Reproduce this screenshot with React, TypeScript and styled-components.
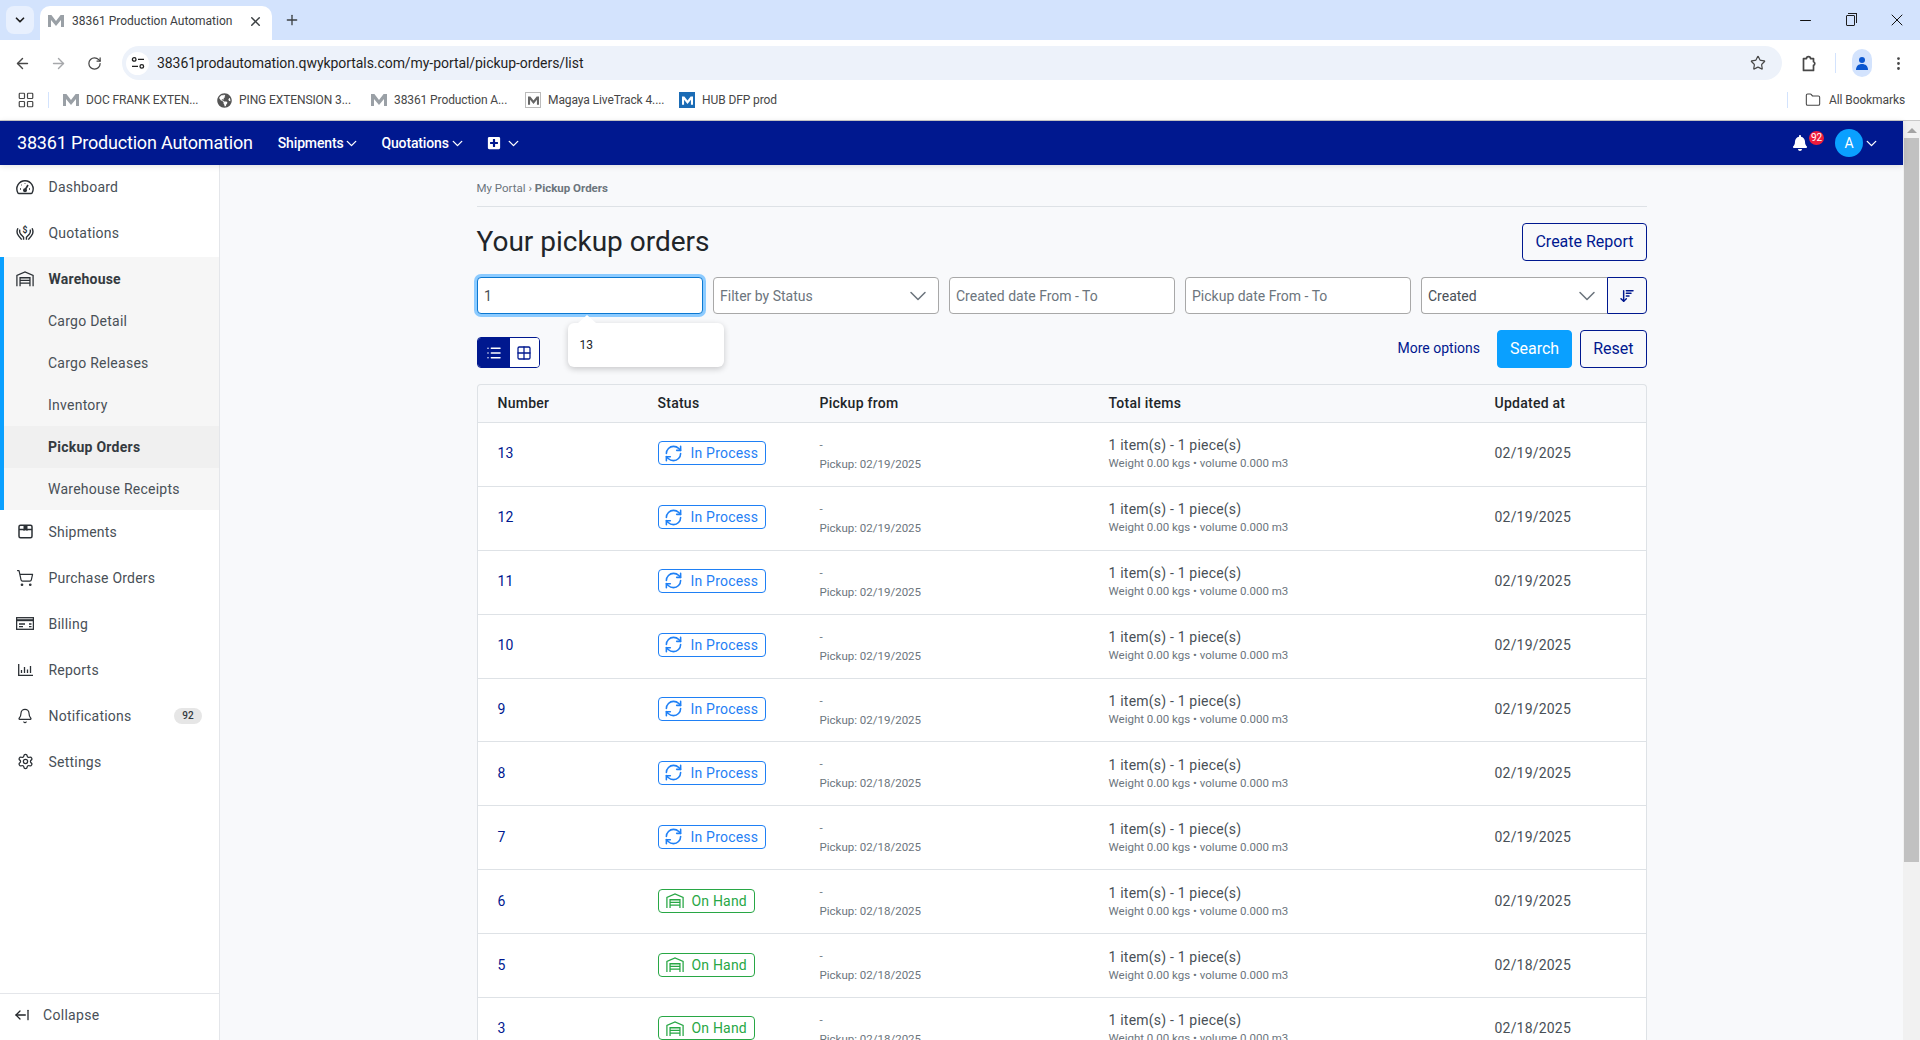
import React from 'react';
import styled, { createGlobalStyle } from 'styled-components';
import {
  ArrowLeft, ArrowRight, RotateCw, Star, EllipsisVertical, LayoutGrid, Folder, ChevronDown,
  X, Plus, Minus, Bell, ShoppingCart, Settings, ArrowLeftFromLine, RefreshCw, List, Grid2x2, ArrowDownWideNarrow,
} from 'lucide-react';
import { FaBell, FaGlobeAmericas, FaPlusSquare } from 'react-icons/fa';

const NAVY = '#00188f';
const SKY = '#0aa0ff';

const GlobalStyle = createGlobalStyle`
  html, body { margin: 0; padding: 0; height: 100%; overflow: hidden; }
  body { font-family: Roboto, "Liberation Sans", sans-serif; font-size: 14px; color: #212529; background: #fff; }
  * { box-sizing: border-box; }
`;

const Screen = styled.div`
  width: 1920px;
  height: 1040px;
  display: flex;
  flex-direction: column;
  overflow: hidden;
`;

/* browser chrome */
const TabStrip = styled.div`
  height: 40px;
  flex: none;
  background: #d3e3fd;
  display: flex;
  align-items: flex-end;
  padding-left: 6px;
`;
const TabSearch = styled.div`
  width: 28px;
  height: 28px;
  margin-bottom: 6px;
  border-radius: 8px;
  background: #e8f0fe;
  display: flex;
  align-items: center;
  justify-content: center;
  color: #1f1f1f;
`;
const Tab = styled.div`
  width: 232px;
  height: 34px;
  margin-left: 6px;
  padding: 0 9px 4px 8px;
  background: #fff;
  border-radius: 10px 10px 0 0;
  display: flex;
  align-items: center;
  gap: 8px;
  font-size: 12px;
  color: #3c4043;
`;
const TabTitle = styled.span`
  flex: 1;
  white-space: nowrap;
`;
const NewTab = styled.div`
  margin: 0 0 10px 12px;
  height: 20px;
  display: flex;
  align-items: center;
  color: #3c4043;
`;
const WindowControls = styled.div`
  margin-left: auto;
  height: 40px;
  display: flex;
  align-items: center;
  color: #111;
`;
const WindowButton = styled.div`
  width: 46px;
  display: flex;
  justify-content: center;
`;
const RestoreGlyph = styled.div`
  width: 9px;
  height: 11px;
  margin-right: 2px;
  border: 1.3px solid #1f1f1f;
  border-radius: 1px;
  position: relative;
  &::before {
    content: '';
    position: absolute;
    top: -3px;
    left: 1px;
    width: 8px;
    height: 9px;
    border-top: 1.3px solid #1f1f1f;
    border-right: 1.3px solid #1f1f1f;
  }
`;
const Toolbar = styled.div`
  height: 40px;
  flex: none;
  background: #fff;
  display: flex;
  align-items: flex-end;
  padding-left: 4px;
  border-radius: 8px 8px 0 0;
`;
const ToolButton = styled.div<{ $dim?: boolean }>`
  width: 36px;
  height: 34px;
  flex: none;
  display: flex;
  align-items: center;
  justify-content: center;
  color: ${(p) => (p.$dim ? '#a6a8ab' : '#474747')};
`;
const Address = styled.div`
  flex: 1;
  height: 34px;
  margin-left: 10px;
  padding: 0 16px 0 4px;
  border-radius: 17px;
  background: #edf2fa;
  display: flex;
  align-items: center;
  gap: 8px;
  font-size: 14px;
  letter-spacing: -0.06px;
  color: #1f1f1f;
`;
const SiteChip = styled.div`
  width: 23px;
  height: 23px;
  border-radius: 50%;
  background: #fff;
  flex: none;
  display: flex;
  align-items: center;
  justify-content: center;
`;
const Url = styled.span`
  flex: 1;
  white-space: nowrap;
`;
const ToolbarRight = styled.div`
  width: 138px;
  height: 34px;
  flex: none;
  display: flex;
  align-items: center;
  padding-left: 9px;
`;
const ToolSeparator = styled.div`
  width: 1px;
  height: 20px;
  background: #d3e3fd;
  margin: 0 16px 0 8px;
  flex: none;
`;
const ProfileChip = styled.div`
  width: 20px;
  height: 28px;
  border-radius: 10px;
  background: #d3e3fd;
  flex: none;
  display: flex;
  align-items: center;
  justify-content: center;
  margin-right: 8px;
`;
const BookmarksBar = styled.div`
  height: 41px;
  flex: none;
  background: #fff;
  border-bottom: 1px solid #c9c9c9;
  display: flex;
  align-items: center;
  padding-left: 17px;
  font-size: 12px;
  letter-spacing: -0.1px;
  color: #474747;
`;
const BarSeparator = styled.div`
  width: 1px;
  height: 16px;
  background: #d3e3fd;
  margin: 0 14px 0 13px;
  flex: none;
`;
const Bookmark = styled.div<{ $last?: boolean }>`
  width: ${(p) => (p.$last ? 'auto' : '154px')};
  flex: none;
  display: flex;
  align-items: center;
  gap: 7px;
  white-space: nowrap;
`;
const AllBookmarks = styled.div`
  margin-left: auto;
  margin-right: 15px;
  display: flex;
  align-items: center;
  gap: 8px;
`;
const AllBookmarksRule = styled.div`
  width: 1px;
  height: 16px;
  background: #d3e3fd;
  margin-right: 9px;
`;

/* page */
const Viewport = styled.div`
  flex: 1;
  min-height: 0;
  display: flex;
`;
const Page = styled.div`
  flex: 1;
  min-width: 0;
  display: flex;
  flex-direction: column;
`;
const Scrollbar = styled.div`
  width: 17px;
  flex: none;
  background: #f1f1f1;
  display: flex;
  flex-direction: column;
  align-items: center;
`;
const ScrollArrow = styled.div`
  margin: 7px 0 5px;
  border-left: 5px solid transparent;
  border-right: 5px solid transparent;
  border-bottom: 5px solid #a3a3a3;
`;
const ScrollThumb = styled.div`
  width: 15px;
  height: 724px;
  background: #c1c1c1;
`;
const NavBar = styled.header`
  height: 44px;
  flex: none;
  background: ${NAVY};
  color: #fff;
  display: flex;
  align-items: center;
  padding: 0 23px 0 17px;
  position: relative;
  z-index: 2;
  box-shadow: 0 1px 6px rgba(0, 0, 0, 0.12);
`;
const Brand = styled.div`
  font-size: 18px;
  letter-spacing: -0.18px;
  margin: -1px 25px 0 0;
  white-space: nowrap;
`;
const NavLink = styled.div`
  display: flex;
  align-items: center;
  font-size: 14px;
  font-weight: 500;
  letter-spacing: -0.15px;
  margin-right: 21px;
`;
const NavChevron = styled(ChevronDown).attrs({ size: 17, strokeWidth: 1.9 })``;
const PlusChevron = styled(NavChevron)`
  margin-left: 4px;
`;
const NavRight = styled.div`
  margin-left: auto;
  display: flex;
  align-items: center;
`;
const BellWrap = styled.div`
  position: relative;
  width: 16px;
  height: 18px;
  margin-right: 26px;
  display: flex;
  align-items: center;
  left: -1px;
`;
const BellBadge = styled.span`
  position: absolute;
  top: -3px;
  left: 17px;
  width: 15px;
  height: 14px;
  border-radius: 50%;
  background: #ed1c3c;
  font-size: 10px;
  line-height: 14px;
  text-align: center;
`;
const Avatar = styled.div`
  width: 28px;
  height: 28px;
  border-radius: 50%;
  background: ${SKY};
  display: flex;
  align-items: center;
  justify-content: center;
  font-size: 14px;
`;
const Body = styled.div`
  flex: 1;
  min-height: 0;
  display: flex;
`;
const Sidebar = styled.aside`
  width: 220px;
  flex: none;
  background: #fff;
  border-right: 1px solid #e4e6ea;
  display: flex;
  flex-direction: column;
`;
const SideItem = styled.div<{ $open?: boolean }>`
  height: ${(p) => (p.$open ? '44px' : '46px')};
  flex: none;
  display: flex;
  align-items: center;
  padding: 0 17px ${(p) => (p.$open ? '0' : '2px')} ${(p) => (p.$open ? '12px' : '16px')};
  color: ${(p) => (p.$open ? '#343a40' : '#495057')};
  font-weight: ${(p) => (p.$open ? 700 : 400)};
  letter-spacing: 0.22px;
`;
const SideIcon = styled.span`
  width: 18px;
  height: 18px;
  margin-right: 14.5px;
  flex: none;
  display: flex;
  align-items: center;
  justify-content: center;
  color: #2b3035;
`;
const SideBadge = styled.span`
  margin-left: auto;
  width: 28px;
  height: 16px;
  border-radius: 8px;
  background: #e6e6e6;
  color: #343a40;
  font-size: 10px;
  font-weight: 500;
  line-height: 16px;
  text-align: center;
  letter-spacing: 0;
`;
const SideGroup = styled.div`
  border-left: 4px solid ${SKY};
  background: #f6f6f6;
  display: flex;
  flex-direction: column;
`;
const SubItem = styled.div<{ $active?: boolean }>`
  height: 41.8px;
  display: flex;
  align-items: center;
  padding: 0 0 1px 44px;
  letter-spacing: 0.25px;
  background: ${(p) => (p.$active ? '#f0f0f0' : 'transparent')};
  color: ${(p) => (p.$active ? '#343a40' : '#495057')};
  font-weight: ${(p) => (p.$active ? 700 : 400)};
`;
const SideFooter = styled.div`
  margin-top: auto;
  height: 47px;
  border-top: 1px solid #e4e6ea;
  display: flex;
  align-items: center;
  gap: 13px;
  padding: 0 0 4px 14px;
  color: #495057;
  letter-spacing: 0.3px;
`;
const Main = styled.main`
  flex: 1;
  min-width: 0;
  background: #f8f9fb;
  overflow: hidden;
`;
const Container = styled.div`
  width: 1170px;
  margin: 0 auto;
  padding-top: 16px;
`;
const Breadcrumb = styled.nav`
  height: 26px;
  border-bottom: 1px solid #dee2e6;
  font-size: 11.5px;
  line-height: 14px;
  color: #6c757d;
  b {
    font-weight: 700;
  }
`;
const TitleRow = styled.div`
  margin-top: 16px;
  display: flex;
  align-items: center;
  justify-content: space-between;
`;
const Title = styled.h1`
  margin: 0;
  font-size: 28px;
  font-weight: 400;
  line-height: 38px;
  color: #212529;
`;
const Button = styled.div<{ $primary?: boolean }>`
  height: 38px;
  padding: 0 12px 2px;
  border: 1px solid ${(p) => (p.$primary ? SKY : NAVY)};
  border-radius: 4px;
  background: ${(p) => (p.$primary ? SKY : 'transparent')};
  color: ${(p) => (p.$primary ? '#fff' : NAVY)};
  font-size: 16px;
  display: flex;
  align-items: center;
`;
const FilterGrid = styled.div`
  margin-top: 16px;
  display: grid;
  grid-template-columns: repeat(5, 1fr);
  gap: 10px;
  height: 37px;
`;
const Field = styled.div<{ $focus?: boolean; $dark?: boolean }>`
  height: 37px;
  padding: 0 6.5px;
  background: #fff;
  border: 1px solid ${(p) => (p.$focus ? '#0b78d1' : '#a8a8a8')};
  border-radius: 4px;
  box-shadow: ${(p) => (p.$focus ? '0 0 0 3px #8ccbff' : 'none')};
  display: flex;
  align-items: center;
  justify-content: space-between;
  color: ${(p) => (p.$dark ? '#495057' : '#6c757d')};
`;
const SelectChevron = styled(ChevronDown).attrs({ size: 28, strokeWidth: 1.3 })`
  margin-right: -1px;
  color: #6c757d;
`;
const SortField = styled.div`
  display: flex;
`;
const SortSelect = styled(Field)`
  flex: 1;
  border-right: 0;
  border-radius: 4px 0 0 4px;
`;
const SortButton = styled.div`
  width: 40px;
  height: 37px;
  flex: none;
  border: 1px solid ${NAVY};
  border-radius: 0 4px 4px 0;
  color: ${NAVY};
  display: flex;
  align-items: center;
  justify-content: center;
`;
const ActionsRow = styled.div`
  margin-top: 16px;
  height: 38px;
  display: flex;
  align-items: flex-end;
  position: relative;
`;
const ViewToggle = styled.div`
  display: flex;
  width: 63px;
  height: 31px;
  border: 1px solid ${NAVY};
  border-radius: 4px;
  overflow: hidden;
`;
const ToggleCell = styled.div<{ $active?: boolean }>`
  flex: ${(p) => (p.$active ? '0 0 32px' : 1)};
  background: ${(p) => (p.$active ? NAVY : '#fff')};
  color: ${(p) => (p.$active ? '#fff' : NAVY)};
  display: flex;
  align-items: center;
  justify-content: center;
`;
const Suggest = styled.div`
  position: absolute;
  left: 91px;
  top: -7px;
  width: 156px;
  height: 44px;
  padding-left: 12px;
  border-radius: 6px;
  background: #fff;
  box-shadow: 0 2px 6px rgba(0, 0, 0, 0.2);
  display: flex;
  align-items: center;
  font-size: 12px;
  color: #212529;
  &::before {
    content: '';
    position: absolute;
    left: 10px;
    top: -8px;
    border-left: 9px solid transparent;
    border-right: 9px solid transparent;
    border-bottom: 8px solid #fff;
  }
`;
const ActionsRight = styled.div`
  margin-left: auto;
  display: flex;
  align-items: center;
  gap: 8px;
`;
const MoreLink = styled.span`
  color: ${NAVY};
  margin: 0 9px 2px 0;
`;
const Table = styled.div`
  margin-top: 16px;
  border: 1px solid #dee2e6;
  border-radius: 4px 4px 0 0;
  border-bottom: 0;
`;
const TableRow = styled.div<{ $head?: boolean }>`
  display: grid;
  grid-template-columns: 160px 162px 289px 386px 1fr;
  align-items: center;
  height: ${(p) => (p.$head ? '38px' : '63.9px')};
  padding-bottom: ${(p) => (p.$head ? '1px' : '2px')};
  background: ${(p) => (p.$head ? 'transparent' : '#fff')};
  border-bottom: 1px solid #dee2e6;
  font-weight: ${(p) => (p.$head ? 500 : 400)};
  color: ${(p) => (p.$head ? '#212529' : '#495057')};
  letter-spacing: ${(p) => (p.$head ? '0.25px' : '0.2px')};
`;
const Cell = styled.div`
  padding-left: 20px;
`;
const NumberLink = styled.span`
  color: ${NAVY};
`;
const StatusChip = styled.span<{ $tone: string }>`
  display: inline-flex;
  align-items: center;
  gap: 8px;
  height: 24px;
  padding: 0 7px;
  border: 1px solid ${(p) => p.$tone};
  border-radius: 4px;
  color: ${(p) => p.$tone};
  letter-spacing: 0.2px;
`;
const SyncIcon = styled(RefreshCw).attrs({ size: 19, strokeWidth: 2 })`
  margin: 0 0 0 -2px;
`;
const CellLine = styled.div<{ $small?: boolean; $tall?: boolean }>`
  font-size: ${(p) => (p.$small ? '11.5px' : '14px')};
  line-height: ${(p) => (p.$tall ? '21px' : p.$small ? '16px' : '20px')};
  color: ${(p) => (p.$small ? '#6c757d' : '#495057')};
  letter-spacing: ${(p) => (p.$small ? '0' : '0.2px')};
`;

const MLogo = ({ color = '#9aa0a6', size = 16 }: { color?: string; size?: number }) => (
  <svg width={size} height={size} viewBox="0 0 16 16"><path fill={color} d="M0 14V2h3.4L8 8l4.6-6H16v12h-3V7l-5 6-5-6v7z" /></svg>
);

const Boxed = styled.span<{ $fill: string; $line: string }>`
  width: 16px;
  height: 16px;
  flex: none;
  background: ${(p) => p.$fill};
  border: 1px solid ${(p) => p.$line};
  display: flex;
  align-items: center;
  justify-content: center;
`;

const ExtensionIcon = () => (
  <svg width="17" height="17" viewBox="0 0 17 17" fill="none" stroke="#474747" strokeWidth="1.7" strokeLinejoin="round">
    <path d="M2.5 3.6h3a2 2 0 0 1 4 0h3v3.2a1.9 1.9 0 0 1 0 3.6v5H2.5z" />
  </svg>
);
const GaugeIcon = () => (
  <svg width="18" height="16" viewBox="0 0 18 16" fill="none" stroke="currentColor" strokeWidth="1.4">
    <path d="M3 14.5h12a1.3 1.3 0 0 0 1.2-.8A8.2 8.2 0 0 0 9 1.7a8.2 8.2 0 0 0-7.2 12 1.3 1.3 0 0 0 1.2.8z" />
    <path d="M9 11l3-5" strokeWidth="1.6" />
    <circle cx="9" cy="11.2" r="1.3" fill="currentColor" />
    <path d="M4 10h1M5.5 6h.5M9 4.2v.6M14 10h-1" strokeWidth="1.5" />
  </svg>
);
const QuoteIcon = () => (
  <svg width="19" height="16" viewBox="0 0 19 16" fill="none" stroke="currentColor" strokeWidth="1.5">
    <path d="M2 3C.6 6 1 9 2.8 11L6 15M4 4.5c-.5 2.5 0 4 1.3 5.2L8 12.5V15" />
    <path d="M17 3c1.4 3 1 6-.8 8L13 15M15 4.5c.5 2.5 0 4-1.3 5.2L11 12.5V15" />
    <text x="9.5" y="8.5" textAnchor="middle" fontSize="9" fontWeight="700" fill="currentColor" stroke="none" fontFamily="Roboto">$</text>
  </svg>
);
const GarageIcon = ({ size = 18 }: { size?: number }) => (
  <svg width={size} height={size * 0.85} viewBox="0 0 20 17" fill="none" stroke="currentColor" strokeWidth="1.4">
    <path d="M1 17V5L10 1l9 4v12" />
    <path d="M4.5 17V7.5h11V17M4.5 10.5h11M4.5 13.5h11" />
  </svg>
);
const BoxIcon = () => (
  <svg width="15" height="15" viewBox="0 0 15 15" fill="none" stroke="currentColor" strokeWidth="1.5">
    <rect x="1" y="1.2" width="13" height="12.6" rx="1.5" />
    <path d="M1 5.5h13" />
    <path d="M5.5 1h4v6l-2-1-2 1z" fill="currentColor" stroke="none" />
  </svg>
);
const BillingIcon = () => (
  <svg width="18" height="13" viewBox="0 0 18 13" fill="none" stroke="currentColor" strokeWidth="1.3">
    <rect x="0.6" y="0.7" width="16.8" height="11.6" />
    <path d="M1 3.2h16" strokeWidth="2" />
    <path d="M3 7h6M3 9.6h4M13 7h2.5M13 9.6h2.5" />
  </svg>
);
const ChartIcon = () => (
  <svg width="15" height="12" viewBox="0 0 15 12" fill="none" stroke="currentColor" strokeWidth="1.3">
    <path d="M.7 0v11.3H15M3.5 9V6M6.5 9V3M9.5 9V5.5M12.5 9V2" />
  </svg>
);

type Order = { id: number; pending: boolean; pickup: string; updated: string };
const orders: Order[] = [
  { id: 13, pending: true, pickup: '02/19/2025', updated: '02/19/2025' },
  { id: 12, pending: true, pickup: '02/19/2025', updated: '02/19/2025' },
  { id: 11, pending: true, pickup: '02/19/2025', updated: '02/19/2025' },
  { id: 10, pending: true, pickup: '02/19/2025', updated: '02/19/2025' },
  { id: 9, pending: true, pickup: '02/19/2025', updated: '02/19/2025' },
  { id: 8, pending: true, pickup: '02/18/2025', updated: '02/19/2025' },
  { id: 7, pending: true, pickup: '02/18/2025', updated: '02/19/2025' },
  { id: 6, pending: false, pickup: '02/18/2025', updated: '02/19/2025' },
  { id: 5, pending: false, pickup: '02/18/2025', updated: '02/18/2025' },
  { id: 3, pending: false, pickup: '02/18/2025', updated: '02/18/2025' },
];

const App: React.FC = () => (
  <Screen>
    <GlobalStyle />
    <TabStrip>
      <TabSearch><ChevronDown size={14} strokeWidth={3} /></TabSearch>
      <Tab>
        <MLogo />
        <TabTitle>38361 Production Automation</TabTitle>
        <X size={15} strokeWidth={2.4} />
      </Tab>
      <NewTab><Plus size={16} strokeWidth={2} /></NewTab>
      <WindowControls>
        <WindowButton><Minus size={17} strokeWidth={1.5} /></WindowButton>
        <WindowButton><RestoreGlyph /></WindowButton>
        <WindowButton><X size={20} strokeWidth={1.2} /></WindowButton>
      </WindowControls>
    </TabStrip>
    <Toolbar>
      <ToolButton><ArrowLeft size={17} strokeWidth={2} /></ToolButton>
      <ToolButton $dim><ArrowRight size={17} strokeWidth={2} /></ToolButton>
      <ToolButton><RotateCw size={15} strokeWidth={2} /></ToolButton>
      <Address>
        <SiteChip>
          <svg width="14" height="14" viewBox="0 0 14 14" fill="none" stroke="#1f1f1f" strokeWidth="1.3">
            <circle cx="3.2" cy="3.4" r="1.8" /><path d="M7 3.4h6M1 10.4h6" /><circle cx="10.8" cy="10.4" r="1.8" />
          </svg>
        </SiteChip>
        <Url>38361prodautomation.qwykportals.com/my-portal/pickup-orders/list</Url>
        <Star size={16} strokeWidth={1.8} color="#474747" />
      </Address>
      <ToolbarRight>
        <ToolButton><ExtensionIcon /></ToolButton>
        <ToolSeparator />
        <ProfileChip>
          <svg width="14" height="14" viewBox="0 0 14 14" fill="#0b57d0"><circle cx="7" cy="4" r="3" /><path d="M1 14c0-4 2.5-6 6-6s6 2 6 6z" /></svg>
        </ProfileChip>
        <ToolButton><EllipsisVertical size={17} strokeWidth={2} /></ToolButton>
      </ToolbarRight>
    </Toolbar>
    <BookmarksBar>
      <LayoutGrid size={18} strokeWidth={1.6} color="#474747" />
      <BarSeparator />
      <Bookmark><MLogo /><span>DOC FRANK EXTEN...</span></Bookmark>
      <Bookmark><FaGlobeAmericas size={15} color="#555" /><span>PING EXTENSION 3...</span></Bookmark>
      <Bookmark><MLogo /><span>38361 Production A...</span></Bookmark>
      <Bookmark><Boxed $fill="#fff" $line="#bbb"><MLogo size={11} color="#666" /></Boxed><span>Magaya LiveTrack 4....</span></Bookmark>
      <Bookmark $last><Boxed $fill="#1c6cb5" $line="#1c6cb5"><MLogo size={11} color="#fff" /></Boxed><span>HUB DFP prod</span></Bookmark>
      <AllBookmarks>
        <AllBookmarksRule />
        <Folder size={16} strokeWidth={1.6} />
        <span>All Bookmarks</span>
      </AllBookmarks>
    </BookmarksBar>
    <Viewport>
      <Page>
        <NavBar>
          <Brand>38361 Production Automation</Brand>
          <NavLink>Shipments<NavChevron /></NavLink>
          <NavLink>Quotations<NavChevron /></NavLink>
          <NavLink><FaPlusSquare size={14} /><PlusChevron /></NavLink>
          <NavRight>
            <BellWrap>
              <FaBell size={16} />
              <BellBadge>92</BellBadge>
            </BellWrap>
            <Avatar>A</Avatar>
            <NavChevron size={18} />
          </NavRight>
        </NavBar>
        <Body>
          <Sidebar>
            <SideItem><SideIcon><GaugeIcon /></SideIcon>Dashboard</SideItem>
            <SideItem><SideIcon><QuoteIcon /></SideIcon>Quotations</SideItem>
            <SideGroup>
              <SideItem $open><SideIcon><GarageIcon /></SideIcon>Warehouse</SideItem>
              <SubItem>Cargo Detail</SubItem>
              <SubItem>Cargo Releases</SubItem>
              <SubItem>Inventory</SubItem>
              <SubItem $active>Pickup Orders</SubItem>
              <SubItem>Warehouse Receipts</SubItem>
            </SideGroup>
            <SideItem><SideIcon><BoxIcon /></SideIcon>Shipments</SideItem>
            <SideItem><SideIcon><ShoppingCart size={18} strokeWidth={1.6} /></SideIcon>Purchase Orders</SideItem>
            <SideItem><SideIcon><BillingIcon /></SideIcon>Billing</SideItem>
            <SideItem><SideIcon><ChartIcon /></SideIcon>Reports</SideItem>
            <SideItem><SideIcon><Bell size={16} strokeWidth={1.8} /></SideIcon>Notifications<SideBadge>92</SideBadge></SideItem>
            <SideItem><SideIcon><Settings size={17} strokeWidth={1.8} /></SideIcon>Settings</SideItem>
            <SideFooter><ArrowLeftFromLine size={16} strokeWidth={1.9} color="#212529" />Collapse</SideFooter>
          </Sidebar>
          <Main>
            <Container>
              <Breadcrumb>My Portal › <b>Pickup Orders</b></Breadcrumb>
              <TitleRow>
                <Title>Your pickup orders</Title>
                <Button>Create Report</Button>
              </TitleRow>
              <FilterGrid>
                <Field $focus $dark>1</Field>
                <Field>Filter by Status <SelectChevron /></Field>
                <Field>Created date From - To</Field>
                <Field>Pickup date From - To</Field>
                <SortField>
                  <SortSelect $dark>Created <SelectChevron /></SortSelect>
                  <SortButton><ArrowDownWideNarrow size={16} strokeWidth={2.2} /></SortButton>
                </SortField>
              </FilterGrid>
              <ActionsRow>
                <ViewToggle>
                  <ToggleCell $active><List size={16} strokeWidth={2.2} /></ToggleCell>
                  <ToggleCell><Grid2x2 size={16} strokeWidth={1.9} /></ToggleCell>
                </ViewToggle>
                <Suggest>13</Suggest>
                <ActionsRight>
                  <MoreLink>More options</MoreLink>
                  <Button $primary>Search</Button>
                  <Button>Reset</Button>
                </ActionsRight>
              </ActionsRow>
              <Table>
                <TableRow $head>
                  <Cell>Number</Cell>
                  <Cell>Status</Cell>
                  <Cell>Pickup from</Cell>
                  <Cell>Total items</Cell>
                  <Cell>Updated at</Cell>
                </TableRow>
                {orders.map((o) => (
                  <TableRow key={o.id}>
                    <Cell><NumberLink>{o.id}</NumberLink></Cell>
                    <Cell>
                      {o.pending ? (
                        <StatusChip $tone="#1f80f5"><SyncIcon />In Process</StatusChip>
                      ) : (
                        <StatusChip $tone="#28a745"><GarageIcon size={18} />On Hand</StatusChip>
                      )}
                    </Cell>
                    <Cell>
                      <CellLine $small $tall>-</CellLine>
                      <CellLine $small>Pickup: {o.pickup}</CellLine>
                    </Cell>
                    <Cell>
                      <CellLine>1 item(s) - 1 piece(s)</CellLine>
                      <CellLine $small>Weight 0.00 kgs • volume 0.000 m3</CellLine>
                    </Cell>
                    <Cell>{o.updated}</Cell>
                  </TableRow>
                ))}
              </Table>
            </Container>
          </Main>
        </Body>
      </Page>
      <Scrollbar>
        <ScrollArrow />
        <ScrollThumb />
      </Scrollbar>
    </Viewport>
  </Screen>
);

export default App;
